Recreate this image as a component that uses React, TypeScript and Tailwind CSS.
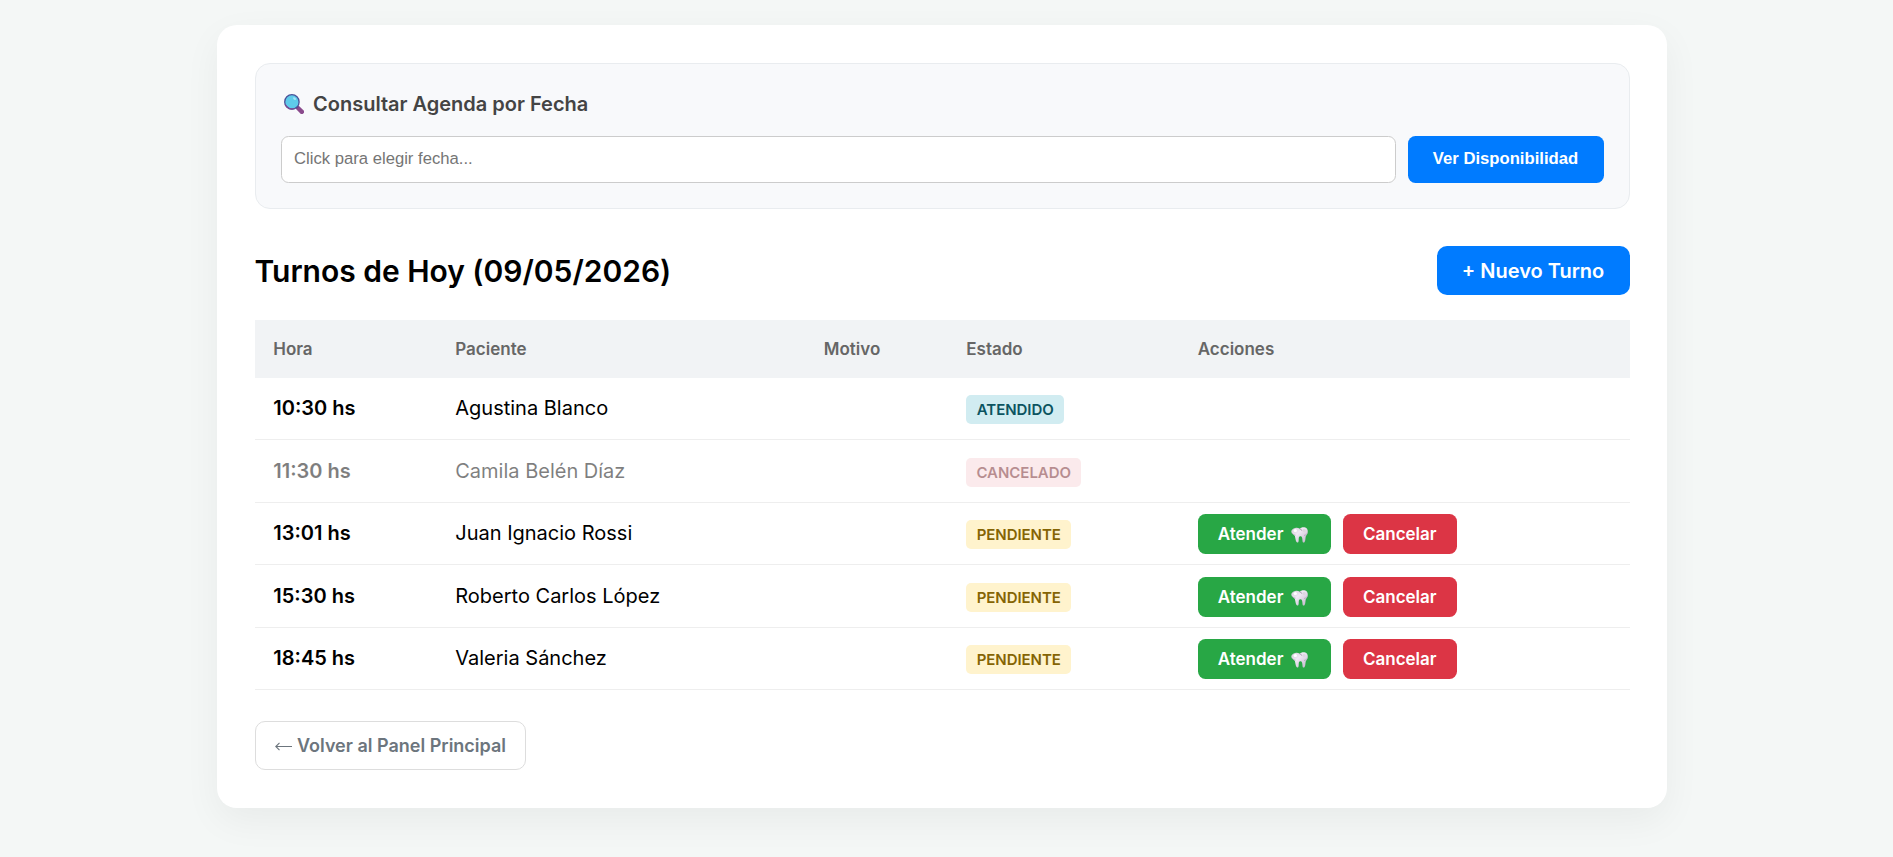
type Estado = 'ATENDIDO' | 'CANCELADO' | 'PENDIENTE';

interface Turno {
  hora: string;
  paciente: string;
  motivo: string;
  estado: Estado;
}

const turnos: Turno[] = [
  { hora: '10:30', paciente: 'Agustina Blanco', motivo: '', estado: 'ATENDIDO' },
  { hora: '11:30', paciente: 'Camila Belén Díaz', motivo: '', estado: 'CANCELADO' },
  { hora: '13:01', paciente: 'Juan Ignacio Rossi', motivo: '', estado: 'PENDIENTE' },
  { hora: '15:30', paciente: 'Roberto Carlos López', motivo: '', estado: 'PENDIENTE' },
  { hora: '18:45', paciente: 'Valeria Sánchez', motivo: '', estado: 'PENDIENTE' },
];

const badgeStyles: Record<Estado, string> = {
  ATENDIDO: 'w-[98px] bg-[#d1ecf1] text-[#0c5460]',
  CANCELADO: 'w-[115px] bg-[#f8d7da] text-[#721c24]',
  PENDIENTE: 'w-[105px] bg-[#fff3cd] text-[#856404]',
};

const columns = 'grid grid-cols-[182px_368.5px_142.5px_231.5px_1fr]';

function SearchIcon() {
  return (
    <svg viewBox="0 0 20 20" className="h-5 w-5 shrink-0">
      <path d="M14 14l3.900 3.800" stroke="#8a4a8c" strokeWidth="4.400" strokeLinecap="round" />
      <path d="M11.6 11.6l2.3 2.2" stroke="#6d4484" strokeWidth="2.4" />
      <circle cx="7.9" cy="7.9" r="7.2" fill="#5ecbea" stroke="#4a5299" strokeWidth="1.3" />
      <path d="M1.3 10.5A7.1 7.1 0 0 0 10.5 14.5" fill="none" stroke="#7c4a93" strokeWidth="1.3" />
      <ellipse cx="10.6" cy="4.6" rx="1.7" ry="1.1" transform="rotate(35 10.6 4.6)" fill="#a5e4f6" />
    </svg>
  );
}

function ToothIcon() {
  return (
    <svg viewBox="0 0 17 16" className="h-4 w-[17px] shrink-0">
      <defs>
        <linearGradient id="tooth" x1="0" y1="0" x2="1" y2="1">
          <stop offset="0" stopColor="#cfc8d3" />
          <stop offset="0.4" stopColor="#f0e9f5" />
          <stop offset="1" stopColor="#bfb2c9" />
        </linearGradient>
      </defs>
      <path
        d="M4.2.9C6 .3 7.4.9 8.6 1.7 9.8.5 11.5 0 13.4.3 15.800.700 17 2.600 16.800 4.900c-.2 2.200-1.400 3.100-2 4.300-.5 2-.2 4.300-1.200 5.900-.5.7-1.600.7-1.900-.2-.4-1.700-.2-4.600-1.300-5.400-.7-.5-1.900-.4-2.400.4-.5 1.400 0 3.700-.6 5-.4.800-1.400.8-1.900.2-1-1.400-1-3.900-1.600-6C3.300 8 .5 7 .3 4.800.1 2.900 2 1.400 4.200.9z"
        fill="url(#tooth)"
      />
      <path d="M8.5 1.8c1.100.1 1.900.7 2.200 1.800" fill="none" stroke="#93889b" strokeWidth=".9" />
      <path d="M1 6c1 1.500 2.200 2 3.500 2.200M16.300 6.400c-.8 1.200-2 1.900-3.300 2.100" fill="none" stroke="#a99eb2" strokeWidth=".7" />
      <ellipse cx="4.3" cy="3.6" rx="1.7" ry="1.5" fill="#fff" />
      <ellipse cx="13" cy="3.5" rx="1.6" ry="1.5" fill="#dcd6e0" />
    </svg>
  );
}

function ArrowIcon() {
  return (
    <svg viewBox="0 0 17 9" className="mt-0.5 h-[9px] w-[17px] shrink-0" fill="none" stroke="currentColor" strokeWidth="1.100">
      <path d="M.8 4.500H17M4.500.8L.8 4.500l3.700 3.700" />
    </svg>
  );
}

function TurnoRow({ turno }: { turno: Turno }) {
  const cancelado = turno.estado === 'CANCELADO';

  return (
    <div className="h-[62.5px] border-b border-[#eee]">
      <div className={`${columns} h-full items-center ${cancelado ? 'opacity-50' : ''}`}>
        <div className="pl-[18.75px] font-semibold">{turno.hora} hs</div>
        <div className="pl-[18.75px]">{turno.paciente}</div>
        <div className="pl-[18.75px]">{turno.motivo}</div>
        <div className="flex pt-[2.5px] pl-[18.75px]">
          <span className={`flex h-[29px] items-center justify-center rounded-[5px] text-[15px] font-semibold tracking-[-0.04px] ${badgeStyles[turno.estado]}`}>
            {turno.estado}
          </span>
        </div>
        <div className="flex gap-3 pt-0.5 pl-[18.75px]">
          {turno.estado === 'PENDIENTE' && (
            <>
              <button className="flex h-10 w-[133px] items-center gap-[8px] rounded-[7.5px] bg-[#28a745] pt-0.5 pl-5 text-[17px] font-semibold text-white">
                Atender
                <ToothIcon />
              </button>
              <button className="h-10 w-[114px] rounded-[7.5px] bg-[#dc3545] pt-0.5 text-[17px] font-semibold text-white">
                Cancelar
              </button>
            </>
          )}
        </div>
      </div>
    </div>
  );
}

export default function App() {
  return (
    <div className="h-screen overflow-hidden bg-[#f4f7f6] pt-[25px] pl-[217px] font-['Inter',sans-serif] text-xl text-black">
      <main className="h-[783px] w-[1450px] rounded-[20px] bg-white p-[37.5px] shadow-[0_12.5px_37.5px_rgba(0,0,0,0.05)]">
        <section className="h-[146px] rounded-[15px] border border-[#e9ecef] bg-[#f8f9fb] px-[25px] pt-[28px]">
          <h3 className="flex h-6 items-center gap-[9.5px] pl-[3px] font-semibold text-[#444]">
            <SearchIcon />
            Consultar Agenda por Fecha
          </h3>
          <div className="mt-[20px] flex h-[47px] gap-[12px]">
            <input
              type="text"
              placeholder="Click para elegir fecha..."
              className="min-w-0 flex-1 rounded-[7.5px] border border-[#ccc] bg-white px-[12.5px] pb-px font-['Liberation_Sans',sans-serif] text-[16.67px] placeholder:text-[#757575]"
            />
            <button className="w-[196px] rounded-[7.5px] bg-[#007bff] pb-px font-['Liberation_Sans',sans-serif] text-[16.67px] font-bold text-white">
              Ver Disponibilidad
            </button>
          </div>
        </section>

        <div className="mt-[37.5px] flex h-[49px] items-center justify-between">
          <h2 className="text-[30px] font-semibold tracking-[-0.02px]">Turnos de Hoy (09/05/2026)</h2>
          <button className="h-[49px] w-[193px] rounded-[10px] bg-[#007bff] font-semibold text-white">
            + Nuevo Turno
          </button>
        </div>

        <div className="mt-[25px]">
          <div className={`${columns} h-[57.5px] items-center bg-[#f1f3f5] pt-0.5 text-[17px] font-semibold text-[#666]`}>
            <div className="pl-[18.75px]">Hora</div>
            <div className="pl-[18.75px]">Paciente</div>
            <div className="pl-[18.75px]">Motivo</div>
            <div className="pl-[18.75px]">Estado</div>
            <div className="pl-[18.75px]">Acciones</div>
          </div>
          {turnos.map((turno) => (
            <TurnoRow key={turno.hora} turno={turno} />
          ))}
        </div>

        <a className="mt-[31px] flex h-[49px] w-[271px] items-center gap-[5px] rounded-[10px] border border-[#ddd] pl-[19.5px] text-[18px] font-semibold text-[#6c757d]">
          <ArrowIcon />
          Volver al Panel Principal
        </a>
      </main>
    </div>
  );
}
